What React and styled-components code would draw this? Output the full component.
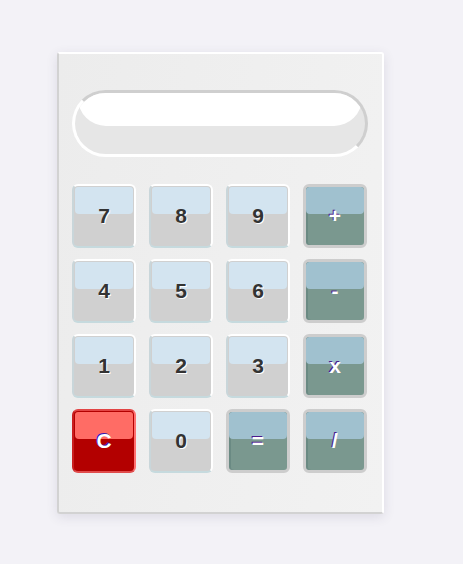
import React from 'react';
import styled, { createGlobalStyle, css } from 'styled-components';

const GlobalStyle = createGlobalStyle`
  html, body {
    margin: 0;
    padding: 0;
    background: #f3f2f7;
    font-family: "Liberation Sans", Arial, sans-serif;
  }
`;

const Page = styled.div`
  min-height: 564px;
  padding: 52px 0 0 57px;
  box-sizing: border-box;
`;

const Calculator = styled.div`
  width: 327px;
  height: 462px;
  box-sizing: border-box;
  padding: 36px 14px 0 13px;
  border: 2px solid;
  border-color: #fff #fff #d2d2d2 #d2d2d2;
  border-radius: 3px;
  background: linear-gradient(100deg, #ececec 0%, #f2f2f2 100%);
  box-shadow: 0 3px 12px rgba(60, 50, 90, 0.12);
`;

const Screen = styled.div`
  position: relative;
  height: 67px;
  box-sizing: border-box;
  border: 3px solid;
  border-color: #cfcfcf #cfcfcf #fff #fff;
  border-radius: 34px;
  background: #e6e6e6;
  overflow: hidden;

  &::before {
    content: '';
    position: absolute;
    top: 0;
    left: 3px;
    right: 3px;
    height: 54%;
    background: #fff;
    border-radius: 0 0 28px 28px;
  }
`;

const Keys = styled.div`
  display: grid;
  grid-template-columns: repeat(4, 64px);
  grid-auto-rows: 64px;
  column-gap: 13px;
  row-gap: 11px;
  margin-top: 27px;
`;

const variants = {
  digit: css`
    border-color: #fff #fff #c6dade #c9d6da;
    background: #d0d0d0;
    color: #333;
    text-shadow: 1px 1px 0 #fff;
    &::before { background: #d3e4f0; }
  `,
  operator: css`
    border-width: 3px;
    border-color: #cdcdcd;
    background: #7a988f;
    color: #fff;
    text-shadow: -1px -1px 0 #4b1a8c;
    box-shadow: inset 2px 0 0 #6a8a83;
    &::before { background: #a0c1cf; top: 0; left: 0; right: 0; }
  `,
  clear: css`
    border-color: #e24545 #ff7070 #e04c4c #c91f1f;
    background: #b30000;
    color: #fff;
    text-shadow: -1px -1px 0 #3a1ab0;
    &::before { background: #ff6c65; }
  `,
};

const Key = styled.button`
  position: relative;
  box-sizing: border-box;
  padding: 0;
  border: 2px solid;
  border-radius: 6px;
  font-family: "Liberation Sans", Arial, sans-serif;
  font-size: 21px;
  font-weight: bold;
  cursor: pointer;
  overflow: hidden;

  &::before {
    content: '';
    position: absolute;
    top: 1px;
    left: 1px;
    right: 1px;
    height: 27px;
    border-radius: 3px 3px 4px 4px;
  }

  span {
    position: relative;
  }

  ${(p) => variants[p.$kind]}
`;

const rows = [
  ['7', '8', '9', '+'],
  ['4', '5', '6', '-'],
  ['1', '2', '3', 'x'],
  ['C', '0', '=', '/'],
];

const kindOf = (label) => {
  if (label === 'C') return 'clear';
  if (/[0-9]/.test(label)) return 'digit';
  return 'operator';
};

export default function App() {
  return (
    <Page>
      <GlobalStyle />
      <Calculator>
        <Screen />
        <Keys>
          {rows.flat().map((label) => (
            <Key key={label} $kind={kindOf(label)}>
              <span>{label}</span>
            </Key>
          ))}
        </Keys>
      </Calculator>
    </Page>
  );
}
